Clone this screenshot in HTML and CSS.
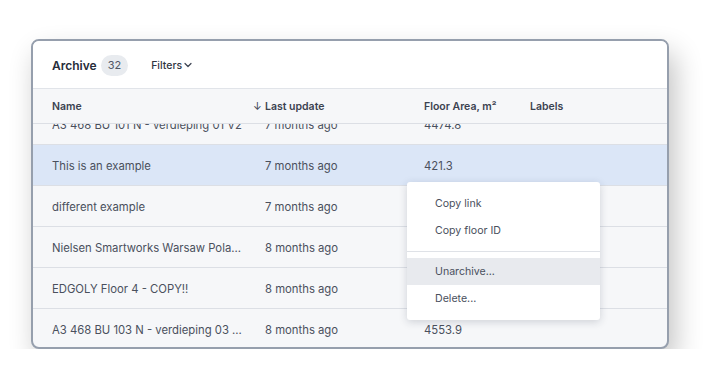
FILE: index.html
```
<!DOCTYPE html>
<html>
    <head>
        <link rel="stylesheet" href="styles.css">
        <title>Archive</title>
    </head>
    <body>
        <div class="frame">
            <div class="topBar">
                <span class="title">Archive</span>
                <span class="badge">32</span>
                <span class="filters">Filters
                    <svg width="8" height="6" viewBox="0 0 8 6"><path d="M1 1.5 L4 4.5 L7 1.5" fill="none" stroke="#3b4250" stroke-width="1.2" stroke-linecap="round" stroke-linejoin="round"/></svg>
                </span>
            </div>

            <div class="headRow">
                <span>Name</span>
                <span><span class="sortArrow">&#8595;</span>Last update</span>
                <span>Floor Area, m&sup2;</span>
                <span>Labels</span>
            </div>

            <div class="rows">
                <div class="row firstRow">
                    <span>A3 468 BU 101 N - verdieping 01 V2</span>
                    <span>7 months ago</span>
                    <span>4474.8</span>
                    <span></span>
                </div>
                <div class="row selected">
                    <span>This is an example</span>
                    <span>7 months ago</span>
                    <span>421.3</span>
                    <span></span>
                </div>
                <div class="row">
                    <span>different example</span>
                    <span>7 months ago</span>
                    <span>1250.0</span>
                    <span></span>
                </div>
                <div class="row">
                    <span>Nielsen Smartworks Warsaw Pola...</span>
                    <span>8 months ago</span>
                    <span>3120.4</span>
                    <span></span>
                </div>
                <div class="row">
                    <span>EDGOLY Floor 4 - COPY!!</span>
                    <span>8 months ago</span>
                    <span>980.2</span>
                    <span></span>
                </div>
                <div class="row">
                    <span>A3 468 BU 103 N - verdieping 03 ...</span>
                    <span>8 months ago</span>
                    <span>4553.9</span>
                    <span></span>
                </div>
            </div>

            <div class="menu">
                <div class="menuItem">Copy link</div>
                <div class="menuItem">Copy floor ID</div>
                <div class="menuDivider"></div>
                <div class="menuItem hovered">Unarchive...</div>
                <div class="menuItem">Delete...</div>
            </div>
        </div>
    </body>
</html>
```

FILE: styles.css
```
html, body {
    margin: 0;
    background: #ffffff;
}
body {
    padding: 39px 0 0 31px;
    font-family: "Inter", "Noto Sans", sans-serif;
    color: #4a505d;
}
.frame {
    position: relative;
    width: 638px;
    height: 310px;
    box-sizing: border-box;
    border: 2px solid #969fad;
    border-radius: 8px;
    background: #f6f7f9;
    overflow: hidden;
    box-shadow: 6px 14px 28px rgba(0, 0, 0, 0.24);
}
.topBar {
    height: 47px;
    background: #ffffff;
    display: flex;
    align-items: center;
    padding-left: 19px;
    padding-top: 1px;
    box-sizing: border-box;
}
.title {
    font-size: 12px;
    font-weight: 600;
    color: #262c39;
}
.badge {
    margin-left: 4px;
    height: 21px;
    padding: 0 7px;
    border-radius: 11px;
    background: #e8ebef;
    font-size: 11px;
    line-height: 21px;
    color: #505765;
}
.filters {
    margin-left: 23px;
    font-size: 10.5px;
    font-weight: 500;
    color: #2f3542;
    display: flex;
    align-items: center;
    gap: 2px;
}
.headRow, .row {
    display: grid;
    grid-template-columns: 213px 159px 106px 1fr;
    align-items: center;
    padding-left: 19px;
}
.headRow {
    height: 34px;
    border-top: 1px solid #e1e4e9;
    border-bottom: 1px solid #dcdfe5;
    background: #f6f7f9;
    font-size: 10.5px;
    font-weight: 600;
    color: #3b4250;
    position: relative;
    z-index: 1;
}
.sortArrow {
    display: inline-block;
    width: 12px;
    margin-left: -12px;
    font-weight: 400;
}
.rows {
    font-size: 11.3px;
}
.row {
    height: 40px;
    padding-top: 2px;
    box-sizing: border-box;
    height: 41px;
    border-bottom: 1px solid #dcdfe5;
}
.row span {
    white-space: nowrap;
    overflow: hidden;
}
.firstRow {
    margin-top: -20px;
}
.selected {
    background: #dbe6f7;
}
.menu {
    position: absolute;
    left: 374px;
    top: 141px;
    width: 193px;
    padding: 8px 0;
    background: #ffffff;
    border-radius: 3px;
    box-shadow: 0 2px 8px rgba(30, 40, 60, 0.18);
    font-size: 10.6px;
    color: #4a505d;
    z-index: 2;
}
.menuItem {
    height: 27px;
    line-height: 27px;
    padding-left: 28px;
}
.menuDivider {
    height: 1px;
    background: #dfe2e7;
    margin: 7px 0 6px;
}
.hovered {
    background: #e8eaee;
}
```
